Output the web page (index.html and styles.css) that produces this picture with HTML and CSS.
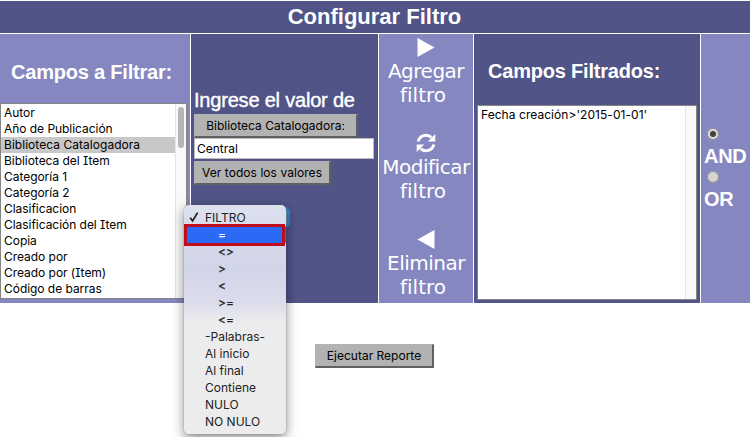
FILE: index.html
```html
<!DOCTYPE html>
<html lang="es">
<head>
<meta charset="utf-8">
<title>Configurar Filtro</title>
<link rel="stylesheet" href="styles.css">
</head>
<body>
<main class="page">
  <h1 class="title">Configurar Filtro</h1>
  <div class="columns">
    <section class="light fields">
      <h2>Campos a Filtrar:</h2>
      <div class="listbox">
        <ul>
          <li>Autor</li><li>Año de Publicación</li><li class="selected">Biblioteca Catalogadora</li><li>Biblioteca del Item</li><li>Categoría 1</li><li>Categoría 2</li><li>Clasificacion</li><li>Clasificación del Item</li><li>Copia</li><li>Creado por</li><li>Creado por (Item)</li><li>Código de barras</li>
        </ul>
        <div class="track"><div class="thumb"></div></div>
      </div>
    </section>
    <section class="dark value">
      <div class="prompt">Ingrese el valor de</div>
      <button class="btn b1">Biblioteca Catalogadora:</button>
      <input class="field" type="text" value="Central">
      <button class="btn b2">Ver todos los valores</button>
      <div class="picker">
        <div class="select-edge"></div>
        <ul class="menu">
          <li><svg class="check" viewBox="0 0 10 12"><path d="M1.2 6.8 3.6 10 8.6 1.6" fill="none" stroke="#222" stroke-width="1.8"/></svg>FILTRO</li>
          <li class="op active">=</li><li class="op">&lt;&gt;</li><li class="op">&gt;</li><li class="op">&lt;</li><li class="op">&gt;=</li><li class="op">&lt;=</li>
          <li>-Palabras-</li><li>Al inicio</li><li>Al final</li><li>Contiene</li><li>NULO</li><li>NO NULO</li>
        </ul>
      </div>
    </section>
    <section class="light actions">
      <div class="action">
        <svg viewBox="0 0 20 24"><path d="M1.5 3 18.5 12.5 1.5 22z" fill="#fff"/></svg>
        <span>Agregar</span><span class="second">filtro</span>
      </div>
      <div class="action">
        <svg viewBox="0 0 20 24"><path d="M2.2 10.5A8 8 0 0 1 15.4 6.4M17.8 13.5A8 8 0 0 1 4.6 17.6" fill="none" stroke="#fff" stroke-width="3"/><path d="M19.3 3v7.5h-7.5zM.7 21v-7.5h7.5z" fill="#fff"/></svg>
        <span>Modificar</span><span class="second">filtro</span>
      </div>
      <div class="action">
        <svg viewBox="0 0 20 24"><path d="M18.5 3 1.5 12.5 18.5 22z" fill="#fff"/></svg>
        <span>Eliminar</span><span class="second">filtro</span>
      </div>
    </section>
    <section class="dark filtered">
      <h2>Campos Filtrados:</h2>
      <div class="listbox">
        <ul><li>Fecha creación&gt;'2015-01-01'</li></ul>
        <div class="track"></div>
      </div>
    </section>
    <section class="light logic">
      <i class="radio on"></i><label>AND</label>
      <i class="radio"></i><label>OR</label>
    </section>
  </div>
  <button class="btn run">Ejecutar Reporte</button>
</main>
</body>
</html>
```
FILE: styles.css
```css
*, *::after { box-sizing: border-box; }
body { margin: 0; background: #fff; overflow: hidden; font-family: Inter, "Liberation Sans", sans-serif; }
ul { list-style: none; margin: 0; padding: 0; }
.page { width: 750px; height: 437px; padding-top: 1px; }
.title { height: 32px; margin: 0 0 1px; background: #505487; color: #fff; font: bold 22px/31px "Liberation Sans", sans-serif; text-align: center; padding-right: 1px; }
.columns { display: grid; grid-template-columns: 190px 187px 94px 226px 49px; grid-template-rows: 269px; column-gap: 1px; height: 269px; }
.light { background: #8587c1; }
.dark { background: #505487; }
h2 { margin: 0; color: #fff; font: bold 20px/24px "Liberation Sans", sans-serif; letter-spacing: -.2px; white-space: nowrap; }
.fields h2 { padding: 26px 0 0 11px; height: 69px; }
.listbox { display: flex; border: 1px solid #858585; background: #fff; }
.fields .listbox { width: 187px; height: 196px; }
.listbox ul { flex: 1; padding-top: 1px; font-size: 12px; line-height: 16px; font-feature-settings: "cv08"; color: #000; white-space: nowrap; }
.fields ul { letter-spacing: -.04px; }
.filtered ul { letter-spacing: .05px; }
.listbox li { height: 16px; padding-left: 3px; }
.listbox .selected { background: #c8c8c8; letter-spacing: .04px; }
.track { width: 11px; background: #f9f9f9; border-left: 1px solid #e4e4e4; padding: 3px 1px 0 2px; }
.thumb { width: 6px; height: 41px; border-radius: 3px; background: #b6b6b6; }
.value { display: flex; flex-direction: column; align-items: flex-start; padding: 54px 0 0 3px; }
.prompt { color: #fff; font: 20px/24px "Liberation Sans", sans-serif; letter-spacing: -.2px; -webkit-text-stroke: .4px #fff; height: 26px; white-space: nowrap; }
.btn { margin: 0; padding: 0; border: 1px solid #b2b2b2; border-right: 2px solid #606060; border-bottom: 2px solid #606060; background: #b2b2b2; color: #000; font: 12px/20px Inter, sans-serif; white-space: nowrap; }
.b1 { width: 164px; height: 24px; }
.field { width: 180px; height: 21px; margin: 0 0 2px; border: 1px solid #bcbcbc; padding: 0 2px; font: 12px Inter, sans-serif; color: #000; outline: 0; }
.b2 { width: 137px; height: 24px; letter-spacing: .06px; }
.picker { position: relative; width: 100px; height: 0; }
.select-edge { position: absolute; left: 79px; top: 22px; width: 17px; height: 21px; border: 3px solid #3d83cb; border-radius: 5px; background: #77aac6; }
.menu { position: absolute; left: -10px; top: 20px; width: 102px; height: 229px; padding-top: 4px; border-radius: 5px; background: linear-gradient(#dde0ed 0, #d2d4e8 28%, #dcdceb 43%, #ececee 51%, #ececec 100%); box-shadow: 0 0 1px #555, 0 4px 12px #0007; font-size: 12px; line-height: 17px; color: #222; }
.menu li { position: relative; height: 17px; padding-left: 21px; white-space: nowrap; }
.menu .op { padding-left: 34px; font-feature-settings: "calt" 0; -webkit-text-stroke: .25px; }
.check { position: absolute; left: 5px; top: 2px; width: 10px; height: 12px; }
.menu .active { background: #2b6af4; color: #fff; }
.active::after { content: ""; position: absolute; left: 0; top: -2px; width: 101px; height: 22px; border: 3px solid #c00d1e; }
.actions { padding-top: 1px; color: #fff; font: 20px/24px "DejaVu Sans", sans-serif; letter-spacing: -.5px; text-align: center; }
.action { height: 96px; display: flex; flex-direction: column; align-items: center; white-space: nowrap; }
.action svg { width: 20px; height: 24px; flex: none; }
.action span { display: block; }
.action .second { padding-right: 6px; letter-spacing: 0; }
.filtered { padding: 25px 3px 0; }
.filtered h2 { padding-left: 11px; height: 46px; }
.filtered .listbox { width: 220px; height: 195px; }
.logic { padding: 94px 0 0 3px; color: #fff; font: bold 20px/24px "Liberation Sans", sans-serif; letter-spacing: -.3px; }
.logic label { display: block; height: 24px; margin-top: 4px; }
.radio { display: block; width: 12px; height: 12px; margin-left: 3px; border-radius: 50%; background: #d5d5d5; box-shadow: 0 0 0 1px #8b8b92 inset; }
.logic label + .radio { margin-top: 3px; }
.radio.on { background: radial-gradient(circle, #444 0 2.7px, #ddd 3.4px); }
.run { display: block; width: 119px; height: 24px; margin: 41px 0 0 315px; }
```
